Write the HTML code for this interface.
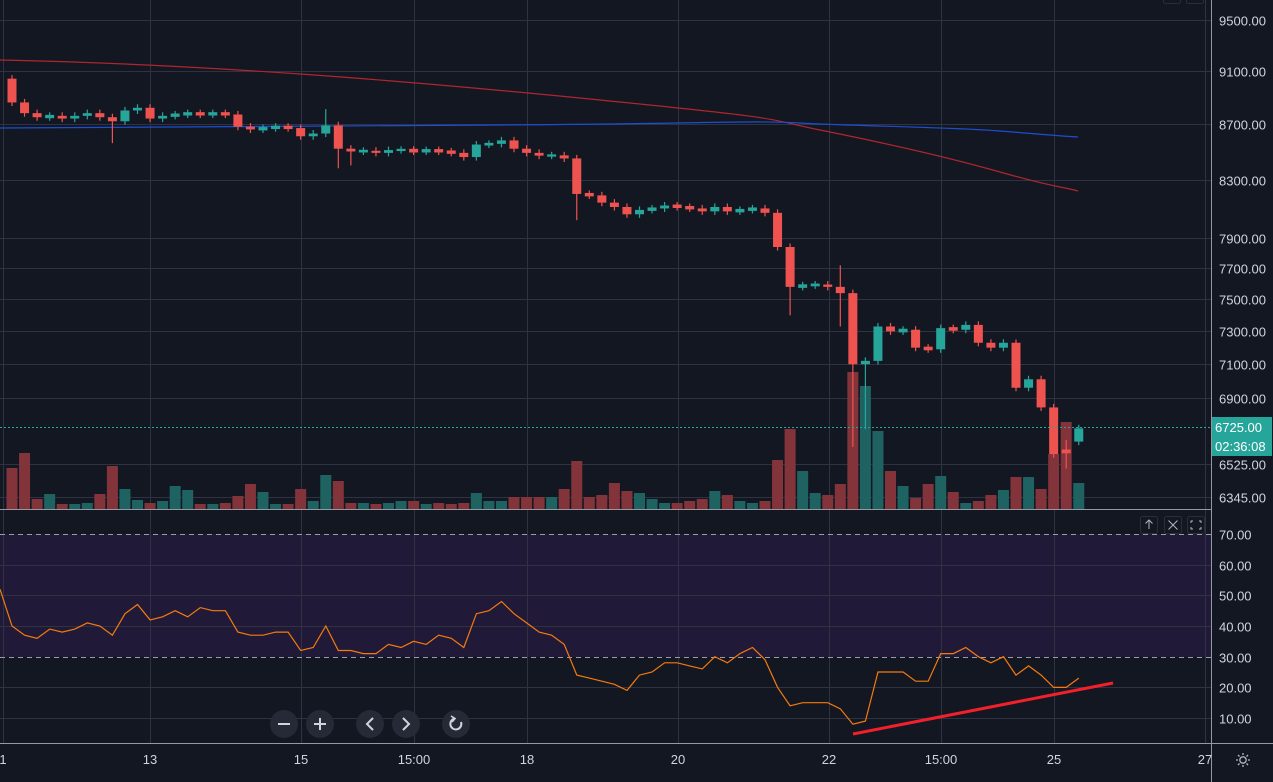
<!DOCTYPE html><html><head><meta charset="utf-8"><style>
html,body{margin:0;padding:0;background:#131722;overflow:hidden}
svg{display:block;font-family:"Liberation Sans",sans-serif}
</style></head><body>
<svg id="s" width="1273" height="782" viewBox="0 0 1273 782" xmlns="http://www.w3.org/2000/svg">
<rect width="1273" height="782" fill="#131722"/>
<rect x="0" y="534" width="1211" height="123" fill="#201a38"/>
<g id="grid" stroke="#2f3341" stroke-width="1"></g>
<g id="vol"></g>
<path d="M0,60 C200,64 400,80 600,100 S760,118 820,130 S940,155 1000,172 S1060,186 1078,191" fill="none" stroke="#b0262e" stroke-width="1.2"/>
<path d="M0,128 C150,126 300,126 500,125 S750,120 800,123 S950,127 1000,131 S1060,136 1078,137" fill="none" stroke="#1c4fd0" stroke-width="1.2"/>
<g id="cdl"></g>
<line x1="0" y1="427.5" x2="1211" y2="427.5" stroke="#26a69a" stroke-dasharray="2,2"/>
<line x1="0" y1="534.5" x2="1211" y2="534.5" stroke="#9a9ca8" stroke-dasharray="5,4"/>
<line x1="0" y1="657.5" x2="1211" y2="657.5" stroke="#9a9ca8" stroke-dasharray="5,4"/>
<polyline id="rsi" fill="none" stroke="#f57a0e" stroke-width="1.2"/>
<line x1="853" y1="734" x2="1113" y2="683" stroke="#f2202a" stroke-width="3"/>
<line x1="0" y1="509.5" x2="1211" y2="509.5" stroke="#9598a1"/>
<line x1="0" y1="743.5" x2="1273" y2="743.5" stroke="#9598a1"/>
<line x1="1211.5" y1="0" x2="1211.5" y2="782" stroke="#9598a1"/>
<g id="lbl" fill="#d1d4dc" font-size="13"></g>
<rect x="1212" y="417" width="60" height="20" fill="#26a69a"/>
<text x="1215" y="432" fill="#fff" font-size="13">6725.00</text>
<rect x="1212" y="437" width="60" height="19" fill="#26a69a"/>
<text x="1215" y="451" fill="#fff" font-size="13">02:36:08</text>
<g fill="none" stroke="#b2b5be" stroke-width="1">
<rect x="1140.5" y="516.5" width="17" height="17" rx="2" fill="#131722" stroke="#2a2e39"/>
<rect x="1164.5" y="516.5" width="17" height="17" rx="2" fill="#131722" stroke="#2a2e39"/>
<rect x="1187.5" y="516.5" width="17" height="17" rx="2" fill="#131722" stroke="#2a2e39"/>
<path d="M1149,529V520M1145.5,523.5L1149,520L1152.5,523.5"/>
<path d="M1168.5,520.5L1177.5,529.5M1177.5,520.5L1168.5,529.5"/>
<path d="M1191,523V521H1193M1199,521H1201V523M1201,527V529H1199M1193,529H1191V527"/>
<rect x="1163.5" y="-4.5" width="17" height="8" rx="2" stroke="#2a2e39"/>
<rect x="1186.5" y="-4.5" width="17" height="8" rx="2" stroke="#2a2e39"/>
</g>
<g fill="#262a36">
<circle cx="284" cy="724" r="14"/><circle cx="320" cy="724" r="14"/><circle cx="370" cy="724" r="14"/><circle cx="406" cy="724" r="14"/><circle cx="456" cy="724" r="14"/>
</g>
<g fill="none" stroke="#d1d4dc" stroke-width="2">
<path d="M278,724H290M314,724H326M320,718V730M373,718L367,724L373,730M403,718L409,724L403,730"/>
<path d="M461,722A5.5,5.5 0 1 1 455,718.5"/><path d="M451,716L455,718.5L452,722" stroke-width="1.6"/>
</g>
<g fill="none" stroke="#b2b5be" stroke-width="1.3"><circle cx="1243" cy="760" r="3.2"/><path d="M1243,753V755M1243,765V767M1236,760H1238M1248,760H1250M1238,755L1239.5,756.5M1246.5,763.5L1248,765M1248,755L1246.5,756.5M1239.5,763.5L1238,765"/></g>
</svg>
<script>
var NS="http://www.w3.org/2000/svg";
function el(p,t,a,txt){var e=document.createElementNS(NS,t);for(var k in a)e.setAttribute(k,a[k]);if(txt)e.textContent=txt;document.getElementById(p).appendChild(e);}
function Y(p){return 20+(Math.log(9500)-Math.log(p))*1182;}
var prices=[9500,9100,8700,8300,7900,7700,7500,7300,7100,6900,6525,6345];
prices.forEach(function(p){var y=Math.round(Y(p))+.5;el("grid","line",{x1:0,y1:y,x2:1211,y2:y});el("lbl","text",{x:1219,y:y+5},p.toFixed(2));});
var rs=[70,60,50,40,30,20,10];rs.forEach(function(v){var y=Math.round(534+(70-v)*3.067)+.5;if(v!=70&&v!=30)el("grid","line",{x1:0,y1:y,x2:1211,y2:y});el("lbl","text",{x:1219,y:y+5},v.toFixed(2));});
var xs=[[3,"1"],[150,"13"],[301,"15"],[414,"15:00"],[527,"18"],[678,"20"],[829,"22"],[941,"15:00"],[1054,"25"],[1205,"27"]];
xs.forEach(function(a){el("grid","line",{x1:a[0]+.5,y1:0,x2:a[0]+.5,y2:743});el("lbl","text",{x:a[0],y:764,"text-anchor":"middle"},a[1]);});
var C=[8860,8780,8750,8760,8740,8760,8780,8750,8720,8800,8820,8740,8760,8770,8780,8770,8780,8770,8680,8660,8670,8680,8670,8610,8630,8690,8520,8500,8505,8490,8510,8512,8500,8510,8500,8490,8460,8550,8555,8580,8520,8490,8470,8472,8450,8200,8190,8140,8110,8060,8090,8100,8120,8110,8100,8080,8110,8080,8090,8100,8070,7840,7580,7590,7595,7580,7540,7100,7120,7330,7300,7310,7200,7190,7320,7310,7340,7230,7200,7230,6960,7010,6845,6580,6590,6725];
var V=[41,56,10,15,5,5,6,15,43,20,9,6,8,23,19,5,5,6,13,25,17,5,5,20,8,34,28,6,6,5,6,8,8,5,6,5,6,16,8,8,12,12,12,12,20,48,12,14,26,18,16,10,6,6,8,10,18,14,8,6,8,49,80,38,16,14,25,137,123,78,38,23,11,25,33,17,6,8,14,19,32,32,20,55,87,26];
var HI={8:0,25:8810,45:0,62:0,66:7720,80:7250,84:6660};var LO={8:8560,45:8020,62:7400,66:7330,67:6620,68:6720,84:6500,26:8380,27:8400};
var prev=9040;
for(var i=0;i<C.length;i++){
 var x=12+i*12.55,o=(i==84?6600:(i==85?6650:prev)),c=C[i],up=c>=o;
 var col=up?"#26a69a":"#ef5350",vc=up?"#1e6262":"#82343a";
 el("vol","rect",{x:x-5.5,y:509-V[i],width:11,height:V[i],fill:vc});
 var h=HI[i]||Math.max(o,c)*1.003,l=LO[i]||Math.min(o,c)*0.997;
 el("cdl","line",{x1:x,y1:Y(h),x2:x,y2:Y(l),stroke:col,"stroke-width":1.2});
 var t=Y(Math.max(o,c)),b=Y(Math.min(o,c));if(b-t<2){t-=1;b+=1;}
 el("cdl","rect",{x:x-4.5,y:t,width:9,height:b-t,fill:col});
 prev=c;
}
var R=[52,40,37,36,39,38,39,41,40,37,44,47,42,43,45,43,46,45,45,38,37,37,38,38,32,33,40,32,32,31,31,34,33,35,34,37,36,33,44,45,48,44,41,38,37,34,24,23,22,21,19,24,25,28,28,27,26,30,28,31,33,29,20,14,15,15,15,13,8,9,25,25,25,22,22,31,31,33,30,28,30,24,27,24,20,20,23];
var pts=R.map(function(v,i){return (i==0?0:12+(i-1)*12.55).toFixed(1)+","+(534+(70-v)*3.067).toFixed(1);}).join(" ");
document.getElementById("rsi").setAttribute("points",pts);
</script>
</body></html>
